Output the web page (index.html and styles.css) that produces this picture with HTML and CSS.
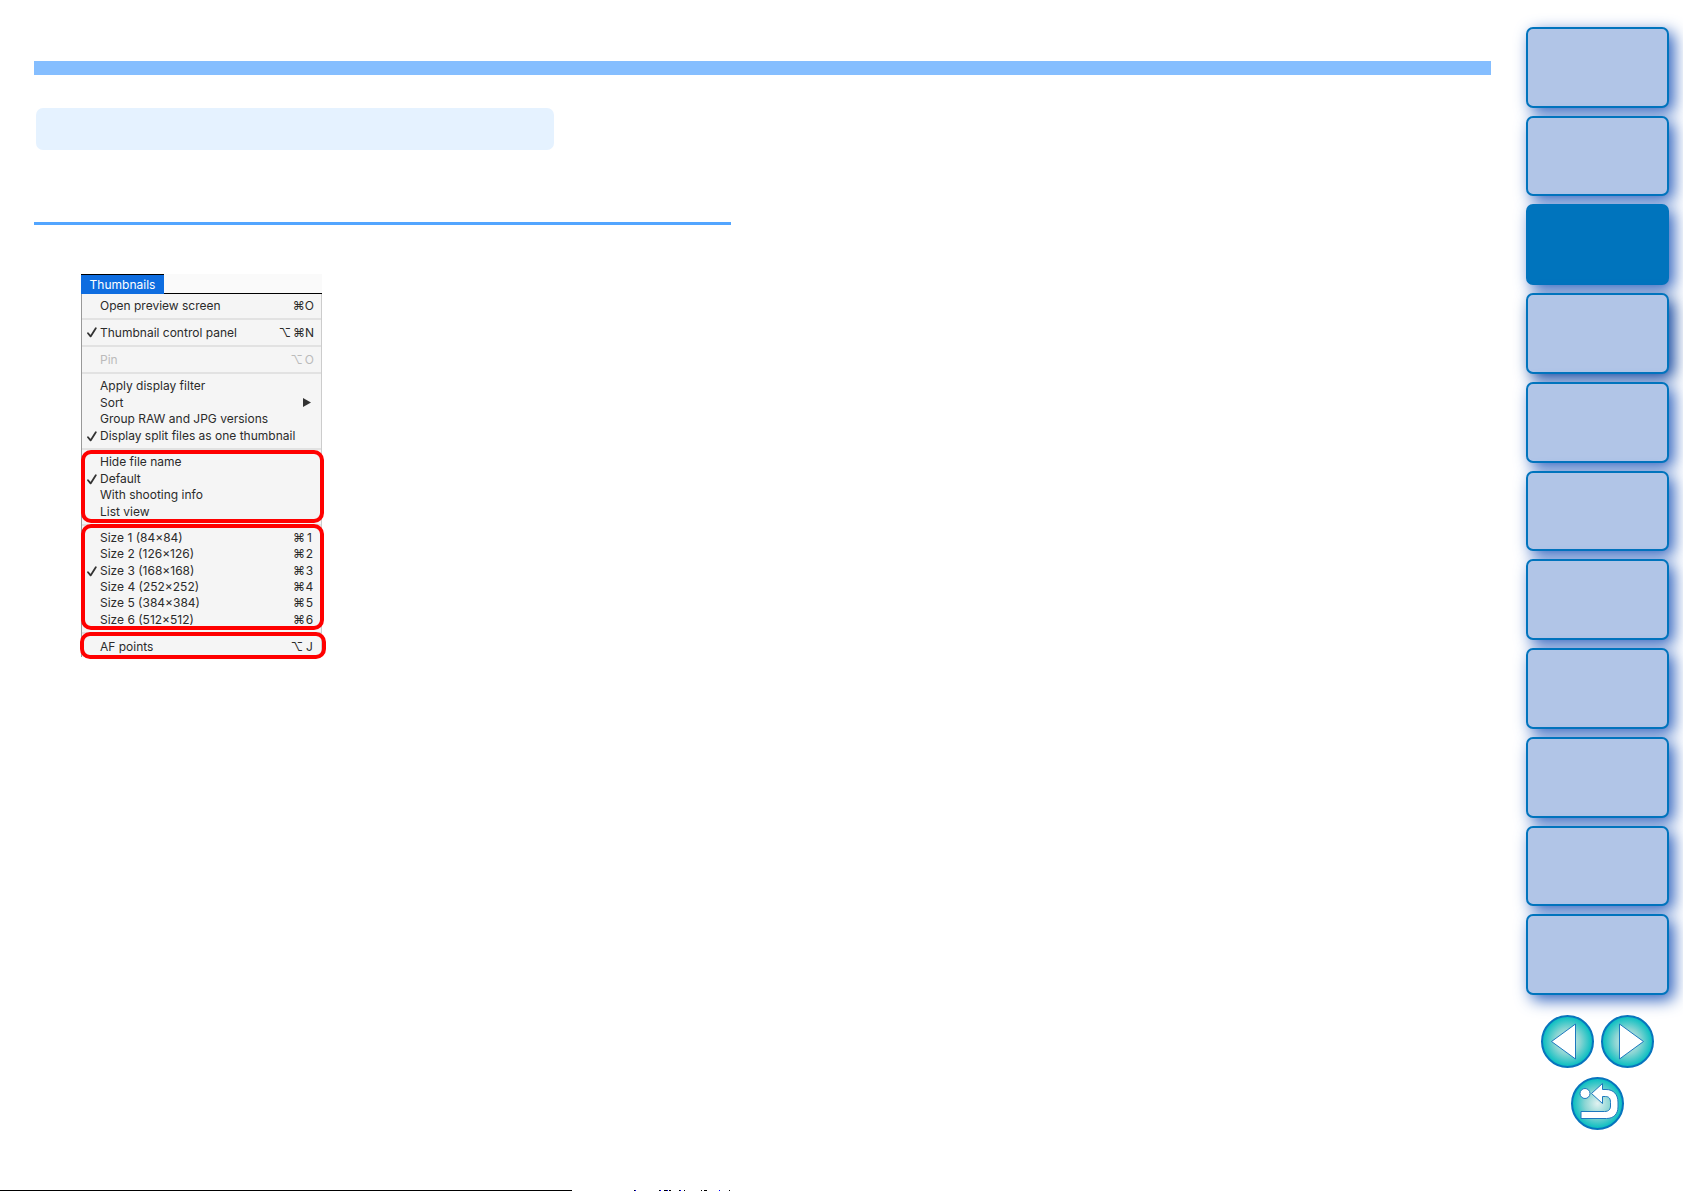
FILE: index.html
```html
<!DOCTYPE html>
<html lang="en">
<head>
<meta charset="utf-8">
<title>Thumbnails menu</title>
<link rel="stylesheet" href="styles.css">
</head>
<body>
<svg class="defs" aria-hidden="true">
  <defs>
    <radialGradient id="teal">
      <stop offset="0" stop-color="#e2f2f1"/>
      <stop offset="0.5" stop-color="#8ad5d3"/>
      <stop offset="1" stop-color="#00bdc0"/>
    </radialGradient>
    <symbol id="check" viewBox="0 0 10 11"><path d="M1 6.2 L3.6 9.4 L8.8 1.2" fill="none" stroke="#333" stroke-width="1.8" stroke-linecap="round" stroke-linejoin="round"/></symbol>
  </defs>
</svg>
<div class="page">
  <main class="content">
    <div class="title-bar"></div>
    <div class="heading-box"></div>
    <div class="rule"></div>
    <section class="menu">
      <div class="menu-head"><span class="menu-title">Thumbnails</span></div>
      <div class="menu-body">
        <ul class="group"><li><span>Open preview screen</span><kbd>⌘O</kbd></li></ul>
        <ul class="group"><li><svg class="check"><use href="#check"/></svg><span>Thumbnail control panel</span><kbd><i>⌥</i>⌘N</kbd></li></ul>
        <ul class="group"><li class="off"><span>Pin</span><kbd><i>⌥</i>O</kbd></li></ul>
        <ul class="group four">
          <li><span>Apply display filter</span></li>
          <li><span>Sort</span><svg class="arrow" viewBox="0 0 8 9"><path d="M0 0 L8 4.500 L0 9 Z" fill="#333"/></svg></li>
          <li><span>Group RAW and JPG versions</span></li>
          <li><svg class="check"><use href="#check"/></svg><span>Display split files as one thumbnail</span></li>
        </ul>
        <ul class="group four marked info">
          <li><span>Hide file name</span></li>
          <li><svg class="check"><use href="#check"/></svg><span>Default</span></li>
          <li><span>With shooting info</span></li>
          <li><span>List view</span></li>
        </ul>
        <ul class="group six marked sizes">
          <li><span>Size 1 (84×84)</span><kbd>⌘<b>1</b></kbd></li>
          <li><span>Size 2 (126×126)</span><kbd>⌘<b>2</b></kbd></li>
          <li><svg class="check"><use href="#check"/></svg><span>Size 3 (168×168)</span><kbd>⌘<b>3</b></kbd></li>
          <li><span>Size 4 (252×252)</span><kbd>⌘<b>4</b></kbd></li>
          <li><span>Size 5 (384×384)</span><kbd>⌘<b>5</b></kbd></li>
          <li><span>Size 6 (512×512)</span><kbd>⌘<b>6</b></kbd></li>
        </ul>
        <ul class="group marked points"><li><span>AF points</span><kbd><i>⌥</i><b>J</b></kbd></li></ul>
      </div>
    </section>
  </main>
  <aside class="side">
    <nav class="tabs" aria-label="Chapters">
      <a href="#c1" aria-label="Chapter 1"></a>
      <a href="#c2" aria-label="Chapter 2"></a>
      <a href="#c3" aria-label="Chapter 3" class="current"></a>
      <a href="#c4" aria-label="Chapter 4" class="deep"></a>
      <a href="#c5" aria-label="Chapter 5"></a>
      <a href="#c6" aria-label="Chapter 6"></a>
      <a href="#c7" aria-label="Chapter 7"></a>
      <a href="#c8" aria-label="Chapter 8"></a>
      <a href="#c9" aria-label="Chapter 9"></a>
      <a href="#c10" aria-label="Chapter 10"></a>
      <a href="#c11" aria-label="Chapter 11"></a>
    </nav>
    <div class="pager">
      <button type="button" aria-label="Previous page"><svg viewBox="0 0 53 53"><circle cx="26.500" cy="26.500" r="25.500" fill="url(#teal)" stroke="#0874bd" stroke-width="2"/><path d="M34.500 9 V44 L10.500 26.500 Z" fill="#fff" stroke="#1c78be"/></svg></button>
      <button type="button" aria-label="Next page"><svg viewBox="0 0 53 53"><circle cx="26.500" cy="26.500" r="25.500" fill="url(#teal)" stroke="#0874bd" stroke-width="2"/><path d="M18.500 9 V44 L42.500 26.500 Z" fill="#fff" stroke="#1c78be"/></svg></button>
      <button type="button" aria-label="Return"><svg viewBox="0 0 53 53"><circle cx="26.500" cy="26.500" r="25.500" fill="url(#teal)" stroke="#0874bd" stroke-width="2"/><circle cx="14" cy="16.500" r="5" fill="#fff" stroke="#1c78be"/><path d="M20.500 16.500 L31.500 6.500 V12.500 H35 C42.500 12.500 47 17.500 47 25 V30 C47 37 42.500 41.500 35.500 41.500 H10 V34.500 H33.500 C38 34.500 39.500 32 39.500 29 V25.500 C39.500 21.500 38 19.500 34.500 19.500 H31.500 V26.500 Z" fill="#fff" stroke="#1c78be"/></svg></button>
    </div>
  </aside>
</div>
<footer class="foot">
  <span class="foot-line"></span>
  <svg class="foot-marks" viewBox="0 0 100 1" aria-hidden="true"><path d="M0 0h1v1h-1zM25 0h1v1h-1zM30 0h4v1h-4zM35 0h2v1h-2zM45 0h1v1h-1zM50 0h1v1h-1zM67 0h1v1h-1zM70 0h3v1h-3zM85 0h1v1h-1zM95 0h1v1h-1z" fill="#000"/><path d="M1 0h1v1h-1zM26 0h1v1h-1zM33 0h1v1h-1zM46 0h1v1h-1zM85 0h1v1h-1z" fill="#00f"/></svg>
</footer>
</body>
</html>
```
FILE: styles.css
```css
* { box-sizing: border-box; }
body {
  margin: 0;
  min-height: 100vh;
  display: flex;
  flex-direction: column;
  background: #fff;
  font-family: Inter, "Liberation Sans", sans-serif;
}
.defs { position: absolute; width: 0; height: 0; }
.page { display: flex; gap: 35px; padding: 0 14px 0 34px; }
.content { flex: 1; min-width: 0; padding-top: 61px; }
.title-bar { height: 14px; background: #85beff; }
.heading-box {
  width: 518px;
  max-width: 100%;
  height: 42px;
  margin: 33px 0 0 2px;
  border-radius: 7px;
  background: #e5f2ff;
}
.rule { width: 697px; max-width: 100%; height: 3px; margin-top: 72px; background: #52a5ff; }

.menu { width: 241px; margin: 49px 0 0 47px; font-size: 12px; color: #2b2b2b; }
.menu-head { display: flex; height: 20px; background: #fafafa; border-bottom: 1px solid #000; }
.menu-title {
  width: 83px;
  height: 20px;
  border-top: 1px solid #000;
  background: #0e6de0;
  color: #fff;
  line-height: 20px;
  text-align: center;
}
.menu-body {
  padding: 3px 0 2px;
  background: #f5f5f5;
  border-left: 1px solid #999;
  border-right: 1px solid #ccc;
}
.group {
  position: relative;
  display: grid;
  grid-auto-rows: 1fr;
  height: 17px;
  margin: 0;
  padding: 0;
  list-style: none;
}
.group + .group { margin-top: 10px; }
.group + .group::before {
  content: "";
  position: absolute;
  top: -6px;
  left: 0;
  right: 0;
  height: 2px;
  background: #e2e2e2;
}
.four { height: 66px; }
.six { height: 98px; }
.group li { position: relative; display: flex; align-items: center; justify-content: space-between; padding: 0 7px 0 18px; line-height: 16px; white-space: nowrap; }
.off { color: #bbb; }
.check { position: absolute; left: 5px; top: 3px; width: 10px; height: 11px; }
.arrow { width: 8px; height: 9px; margin-right: 3px; }
kbd { display: flex; font: inherit; }
kbd i { font-style: normal; margin-right: 2px; }
kbd b { width: 9px; font-weight: 400; text-align: center; }
.marked::after {
  content: "";
  position: absolute;
  border: 4px solid #f00;
  border-radius: 10px;
}
.info::after { inset: -4px -3px -3px -1px; }
.sizes::after { inset: -6px -3px -2px -1px; }
.points::after { inset: -6px -5px -4px -2px; }

.side { width: 143px; padding-top: 27px; }
.tabs { display: grid; grid-auto-rows: 1fr; gap: 8px; height: 968px; }
.tabs a {
  border: 2px solid #0074bd;
  border-radius: 7px;
  background: #b1c5e7;
  box-shadow: 5px 5px 16px #2f62be;
}
.tabs .current { background: #0074bd; }
.tabs .deep { box-shadow: 5px 5px 16px #0c409c; }
.pager { display: flex; flex-wrap: wrap; justify-content: center; gap: 9px 7px; margin-top: 20px; }
.pager button { width: 53px; height: 53px; padding: 0; border: 0; border-radius: 50%; background: none; }
.pager svg { display: block; width: 53px; height: 53px; }

.foot { display: flex; gap: 62px; height: 1px; margin-top: auto; }
.foot-line { width: 34%; background: #000; }
.foot-marks { width: 100px; height: 1px; }
```
